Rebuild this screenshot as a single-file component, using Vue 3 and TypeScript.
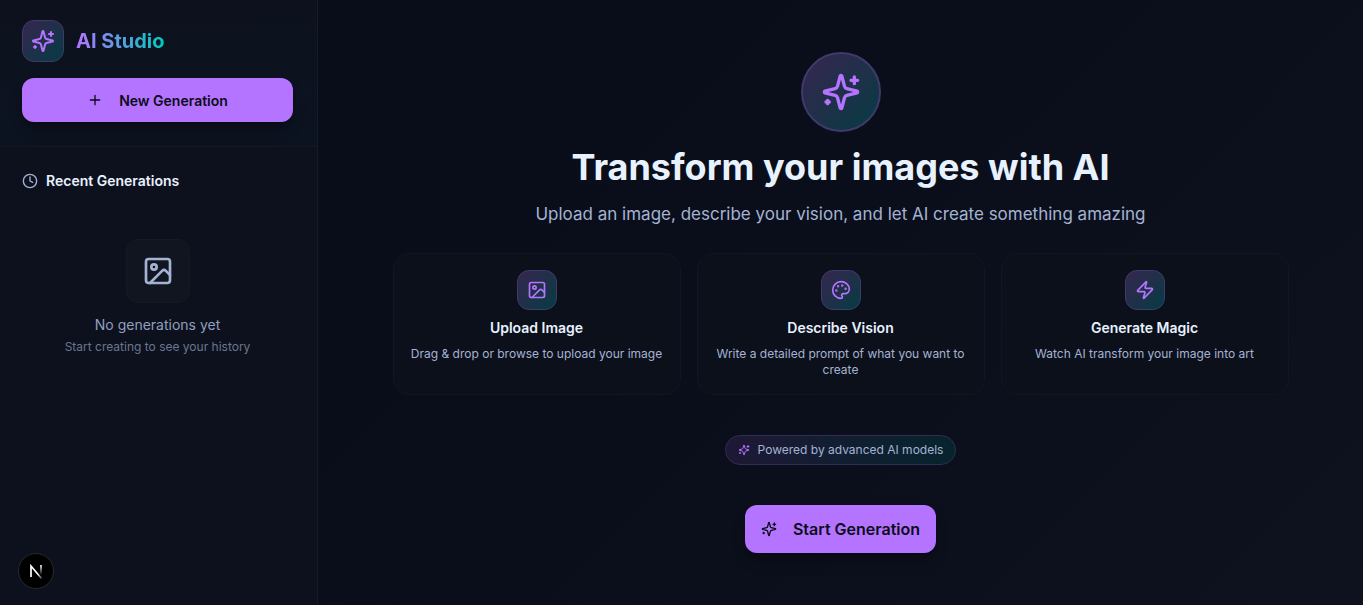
<script setup lang="ts">
import { h, type FunctionalComponent } from 'vue'

type Shape = [tag: string, attrs: Record<string, string | number>]

const shapes: Record<string, Shape[]> = {
  sparkles: [
    ['path', { d: 'M9.937 15.5A2 2 0 0 0 8.5 14.063l-6.135-1.582a.5.5 0 0 1 0-.962L8.5 9.936A2 2 0 0 0 9.937 8.5l1.582-6.135a.5.5 0 0 1 .963 0L14.063 8.5A2 2 0 0 0 15.5 9.937l6.135 1.581a.5.5 0 0 1 0 .964L15.5 14.063a2 2 0 0 0-1.437 1.437l-1.582 6.135a.5.5 0 0 1-.963 0z' }],
    ['path', { d: 'M20 3v4M22 5h-4M4 17v2M5 18H3' }],
  ],
  plus: [['path', { d: 'M5 12h14M12 5v14' }]],
  clock: [
    ['circle', { cx: 12, cy: 12, r: 10 }],
    ['path', { d: 'M12 6v6l4 2' }],
  ],
  image: [
    ['rect', { x: 3, y: 3, width: 18, height: 18, rx: 2 }],
    ['circle', { cx: 9, cy: 9, r: 2 }],
    ['path', { d: 'm21 15-3.086-3.086a2 2 0 0 0-2.828 0L6 21' }],
  ],
  palette: [
    ['circle', { cx: 13.5, cy: 6.5, r: 0.5, fill: 'currentColor' }],
    ['circle', { cx: 17.5, cy: 10.5, r: 0.5, fill: 'currentColor' }],
    ['circle', { cx: 8.5, cy: 7.5, r: 0.5, fill: 'currentColor' }],
    ['circle', { cx: 6.5, cy: 12.5, r: 0.5, fill: 'currentColor' }],
    ['path', { d: 'M12 2C6.5 2 2 6.5 2 12s4.5 10 10 10c.926 0 1.648-.746 1.648-1.688 0-.437-.18-.835-.437-1.125-.29-.289-.438-.652-.438-1.125a1.64 1.64 0 0 1 1.668-1.668h1.996c3.051 0 5.555-2.503 5.555-5.554C21.965 6.012 17.461 2 12 2z' }],
  ],
  zap: [
    ['path', { d: 'M4 14a1 1 0 0 1-.78-1.63l9.9-10.2a.5.5 0 0 1 .86.46l-1.92 6.02A1 1 0 0 0 13 10h7a1 1 0 0 1 .78 1.63l-9.9 10.2a.5.5 0 0 1-.86-.46l1.92-6.02A1 1 0 0 0 11 14z' }],
  ],
}

const Icon: FunctionalComponent<{ name: string; size: number }> = (props) =>
  h(
    'svg',
    {
      width: props.size,
      height: props.size,
      viewBox: '0 0 24 24',
      fill: 'none',
      stroke: 'currentColor',
      'stroke-width': 2,
      'stroke-linecap': 'round',
      'stroke-linejoin': 'round',
      'aria-hidden': 'true',
    },
    shapes[props.name].map(([tag, attrs]) => h(tag, attrs)),
  )
Icon.props = ['name', 'size']

const features = [
  { icon: 'image', title: 'Upload Image', text: 'Drag & drop or browse to upload your image' },
  { icon: 'palette', title: 'Describe Vision', text: 'Write a detailed prompt of what you want to create' },
  { icon: 'zap', title: 'Generate Magic', text: 'Watch AI transform your image into art' },
]
</script>

<template>
  <div class="app">
    <aside class="sidebar">
      <header class="sidebar-head">
        <div class="brand">
          <span class="tile brand-tile"><Icon name="sparkles" :size="24" /></span>
          <span class="brand-name">AI Studio</span>
        </div>
        <button type="button" class="btn btn-new"><Icon name="plus" :size="16" />New Generation</button>
      </header>
      <section class="recent">
        <h2 class="recent-title"><Icon name="clock" :size="16" />Recent Generations</h2>
        <div class="empty">
          <span class="empty-tile"><Icon name="image" :size="32" /></span>
          <p class="empty-title">No generations yet</p>
          <p class="empty-text">Start creating to see your history</p>
        </div>
      </section>
    </aside>

    <main class="main">
      <span class="tile hero-tile"><Icon name="sparkles" :size="40" /></span>
      <h1 class="title">Transform your images with AI</h1>
      <p class="subtitle">Upload an image, describe your vision, and let AI create something amazing</p>
      <ul class="cards">
        <li v-for="f in features" :key="f.title" class="card">
          <span class="tile card-tile"><Icon :name="f.icon" :size="20" /></span>
          <h3 class="card-title">{{ f.title }}</h3>
          <p class="card-text">{{ f.text }}</p>
        </li>
      </ul>
      <div class="pill"><Icon name="sparkles" :size="12" />Powered by advanced AI models</div>
      <button type="button" class="btn btn-start"><Icon name="sparkles" :size="16" />Start Generation</button>
    </main>

    <button type="button" class="dev-badge" aria-label="Open developer tools">
      <svg width="40" height="40" viewBox="0 0 40 40" fill="none" aria-hidden="true">
        <defs>
          <linearGradient id="diag" x1="23" y1="22" x2="27" y2="28" gradientUnits="userSpaceOnUse">
            <stop stop-color="#fff" />
            <stop offset="1" stop-color="#fff" stop-opacity="0.1" />
          </linearGradient>
          <linearGradient id="stem" x1="25" y1="14" x2="25" y2="24" gradientUnits="userSpaceOnUse">
            <stop stop-color="#fff" />
            <stop offset="1" stop-color="#fff" stop-opacity="0" />
          </linearGradient>
        </defs>
        <path d="M15 26V15L25.500 27.500" stroke="url(#diag)" stroke-width="1.700" />
        <path d="M25 14v11" stroke="url(#stem)" stroke-width="1.700" />
      </svg>
    </button>
  </div>
</template>

<style>
body {
  margin: 0;
  background: #090d1a;
}
</style>

<style scoped>
.app {
  display: flex;
  min-height: 100vh;
  font-family: Inter, 'Liberation Sans', sans-serif;
  color: #e8f2ff;
  background: linear-gradient(135deg, #090c19 0%, #0a0e1a 50%, #0e121e 100%);
}
h1, h2, h3, p, ul {
  margin: 0;
  padding: 0;
}
svg {
  flex: none;
}
.sidebar {
  box-sizing: border-box;
  flex: none;
  width: 318px;
  border-right: 1px solid #171b27;
  background: #0d111e;
}
.sidebar-head {
  display: flex;
  flex-direction: column;
  gap: 16px;
  padding: 20px 24px 24px 22px;
  border-bottom: 1px solid #141824;
  background: linear-gradient(180deg, #0d111e, #0c1320);
}
.brand {
  display: flex;
  align-items: center;
  gap: 12px;
}
.tile {
  box-sizing: border-box;
  display: flex;
  align-items: center;
  justify-content: center;
  border: 1px solid #403a6b;
  border-radius: 12px;
  color: #b574ff;
  background: linear-gradient(135deg, #34264f 0%, #203049 50%, #033c43 100%);
}
.brand-tile {
  width: 42px;
  height: 42px;
}
.brand-name {
  font-size: 20px;
  line-height: 28px;
  font-weight: 700;
  color: transparent;
  background: linear-gradient(90deg, #b574ff, #00c9c0);
  background-clip: text;
}
.btn {
  display: flex;
  align-items: center;
  justify-content: center;
  gap: 16px;
  padding: 0 16px;
  border: 0;
  border-radius: 12px;
  font-family: inherit;
  font-weight: 600;
  color: #0a0c18;
  background: #b574ff;
  box-shadow: 0 10px 15px -3px rgba(0, 0, 0, 0.3), 0 4px 6px -4px rgba(0, 0, 0, 0.3);
  cursor: pointer;
}
.btn-new {
  height: 44px;
  font-size: 14px;
}
.recent {
  padding: 24px 24px 24px 22px;
}
.recent-title {
  display: flex;
  align-items: center;
  gap: 8px;
  font-size: 14px;
  line-height: 20px;
  font-weight: 600;
}
.recent-title svg {
  color: #a4b3d3;
}
.empty {
  display: flex;
  flex-direction: column;
  align-items: center;
  padding-top: 48px;
  text-align: center;
  color: #a4b3d3;
}
.empty-tile {
  box-sizing: border-box;
  display: flex;
  align-items: center;
  justify-content: center;
  width: 64px;
  height: 64px;
  margin-bottom: 12px;
  border: 1px solid #141925;
  border-radius: 12px;
  background: #10151f;
}
.empty-title {
  font-size: 14px;
  line-height: 20px;
  color: #919fbd;
}
.empty-text {
  margin-top: 4px;
  font-size: 12px;
  line-height: 16px;
  color: #6b7691;
}
.main {
  flex: 1;
  min-width: 0;
  display: flex;
  flex-direction: column;
  align-items: center;
  justify-content: center;
  padding: 24px;
  text-align: center;
}
.hero-tile {
  width: 80px;
  height: 80px;
  border-width: 2px;
  border-radius: 50%;
}
.title {
  margin-top: 16px;
  font-size: 36px;
  line-height: 38px;
  font-weight: 700;
}
.subtitle {
  margin-top: 14px;
  font-size: 17px;
  line-height: 29px;
  color: #a4b3d3;
}
.cards {
  display: grid;
  grid-template-columns: repeat(3, 1fr);
  gap: 16px;
  width: 100%;
  max-width: 896px;
  margin: 24px 0 40px;
  list-style: none;
}
.card {
  display: flex;
  flex-direction: column;
  align-items: center;
  gap: 8px;
  padding: 16px;
  border: 1px solid #121622;
  border-radius: 16px;
  background: #0c101b;
}
.card-tile {
  width: 40px;
  height: 40px;
}
.card-title {
  font-size: 14px;
  line-height: 20px;
  font-weight: 600;
}
.card-text {
  font-size: 12px;
  line-height: 16px;
  color: #a4b3d3;
}
.pill {
  display: flex;
  align-items: center;
  gap: 8px;
  padding: 6px 12px;
  border: 1px solid #302c55;
  border-radius: 16px;
  font-size: 12px;
  line-height: 16px;
  color: #a4b3d3;
  background: linear-gradient(90deg, #1e1835, #06242d);
}
.pill svg {
  color: #b574ff;
}
.btn-start {
  height: 48px;
  margin-top: 40px;
  font-size: 16px;
}
.dev-badge {
  position: fixed;
  left: 18px;
  bottom: 16px;
  display: flex;
  align-items: center;
  justify-content: center;
  width: 36px;
  height: 36px;
  padding: 0;
  overflow: hidden;
  border: 1px solid #2a2a2c;
  border-radius: 50%;
  background: #000;
  cursor: pointer;
}
</style>
